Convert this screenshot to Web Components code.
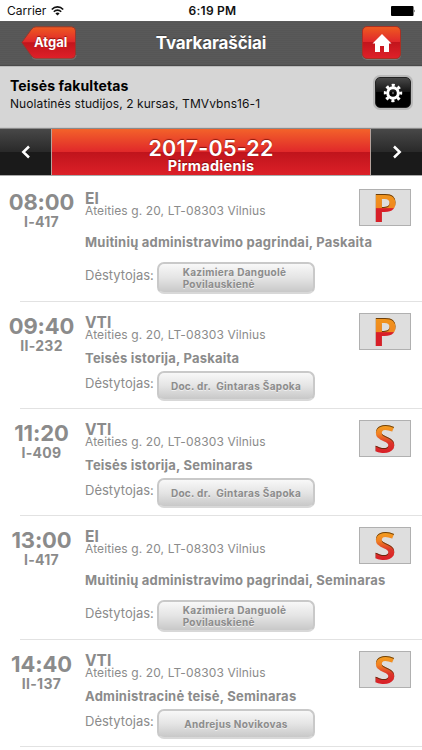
<!DOCTYPE html>
<html lang="lt">
<head>
<meta charset="utf-8">
<title>Tvarkaraščiai</title>
<style>
    body {
        margin: 0;
        width: 422px;
        height: 750px;
        overflow: hidden;
        background: #fff;
        font-family: Inter, "Liberation Sans", sans-serif;
    }
</style>
</head>
<body>
<timetable-app></timetable-app>

<script>
const define = (name, template) => customElements.define(name,
    class extends HTMLElement {
        constructor() {
            super();
            this.attachShadow({ mode: 'open' }).innerHTML = template;
        }
    });

define('status-bar', `<style>
    :host {
        display: grid;
        grid-template-columns: 1fr auto 1fr;
        align-items: center;
        height: 21px;
        padding: 0 6px 0 7px;
        box-sizing: border-box;
        font-size: 12px;
        line-height: 20px;
        color: #111;
    }
    .left { display: flex; align-items: center; gap: 5px; }
    .time { padding-left: 2px; font-weight: 600; letter-spacing: 0.25px; }
    .battery { justify-self: end; }
    svg { display: block; }
</style>
<div class="left">
    <span>Carrier</span>
    <svg width="13" height="10" viewBox="0 0 13 10" fill="none" stroke="#111" stroke-width="1.6">
        <path d="M.8 3.6C4-.1 9-.1 12.200 3.600M2.800 5.800C5 3.500 8 3.500 10.200 5.800"/>
        <path d="M4.400 7.400C5.600 6.200 7.400 6.200 8.600 7.400L6.500 9.600Z" fill="#111" stroke="none"/>
    </svg>
</div>
<span class="time">6:19 PM</span>
<svg class="battery" width="25" height="10" viewBox="0 0 25 10">
    <rect width="22.500" height="10" rx="1" fill="#000"/>
    <path d="M23.300 3.500Q24.600 5 23.300 6.500Z" fill="#000"/>
</svg>`);

define('back-button', `<style>
    :host { display: block; position: relative; width: 56px; height: 34px; }
    svg { display: block; }
    span {
        position: absolute;
        left: 13px;
        top: 0;
        font-size: 13px;
        font-weight: 700;
        line-height: 33px;
        color: #fff;
        text-shadow: 0 -1px 1px rgba(90, 0, 0, 0.6);
    }
</style>
<svg width="56" height="34" viewBox="0 0 56 34">
    <defs>
        <linearGradient id="g" x1="0" y1="0" x2="0" y2="1">
            <stop offset="0" stop-color="#ee5a20"/>
            <stop offset=".48" stop-color="#e0282c"/>
            <stop offset=".5" stop-color="#c2151c"/>
            <stop offset="1" stop-color="#df2029"/>
        </linearGradient>
    </defs>
    <path d="M.8 16.500L10.500 3.200Q12.500.800 15 .800H50.500Q54.500.800 54.500 4.800V28.500Q54.500 32.500 50.500 32.500H15Q12.500 32.500 10.500 30Z" fill="url(#g)" stroke="#8f3a30" stroke-width="1"/>
    <path d="M11 31.500Q12.500 33.200 15 33.200H50.500Q54.500 33.200 55.100 29" fill="none" stroke="#888" stroke-width=".6"/>
</svg>
<span><slot></slot></span>`);

define('icon-button', `<style>
    :host {
        display: flex;
        align-items: center;
        justify-content: center;
        box-sizing: border-box;
        width: 39px;
        height: 33px;
        border: 1px solid #a83024;
        border-radius: 5px;
        background: linear-gradient(#ee5a20, #e0282c 48%, #c2151c 50%, #df2029);
        box-shadow: 0 1px 0 #777;
    }
    :host([dark]) {
        width: 36px;
        height: 31px;
        border-color: #222;
        background: linear-gradient(#484848, #141414 48%, #000 50%, #000);
        box-shadow: 0 0 0 2px #b9b9b9;
    }
</style>
<slot></slot>`);

define('title-bar', `<style>
    :host {
        display: grid;
        grid-template-columns: 56px 1fr 39px;
        align-items: start;
        box-sizing: border-box;
        height: 45px;
        padding: 5px 21px 0;
        background: repeating-linear-gradient(#595959 0 1px, #565656 1px 2px);
        border-bottom: 1px solid #4a4a4a;
    }
    h1 {
        margin: 0;
        padding-right: 17px;
        text-align: center;
        font-size: 17px;
        font-weight: 700;
        line-height: 35px;
        letter-spacing: -0.15px;
        color: #fff;
        text-shadow: 0 -1px 1px rgba(0, 0, 0, 0.3);
    }
</style>
<slot name="back"></slot>
<h1><slot></slot></h1>
<slot name="action"></slot>`);

define('group-info', `<style>
    :host {
        display: flex;
        align-items: flex-start;
        justify-content: space-between;
        box-sizing: border-box;
        height: 62px;
        padding: 10px 11px 0 10px;
        background: #d6d6d6;
        border-top: 1px solid #bbb;
        border-bottom: 1px solid #c9c9c9;
        color: #111;
    }
    .name { font-size: 14px; font-weight: 700; line-height: 18px; letter-spacing: 0.12px; color: #000; }
    .group { font-size: 12px; line-height: 17px; letter-spacing: 0.08px; }
</style>
<div>
    <div class="name"><slot name="name"></slot></div>
    <div class="group"><slot></slot></div>
</div>
<slot name="action"></slot>`);

define('day-picker', `<style>
    :host {
        display: grid;
        grid-template-columns: 51px 1fr 51px;
        box-sizing: border-box;
        height: 48px;
        margin-bottom: 2px;
        border-top: 1px solid #8a8a8a;
        border-bottom: 1px solid #aaa;
    }
    .arrow {
        display: flex;
        align-items: center;
        justify-content: center;
        background: linear-gradient(#484848, #292929 50%, #1a1a1a 51%, #1a1a1a);
    }
    .day {
        padding-top: 8px;
        text-align: center;
        color: #fff;
        border: solid #b5a29c;
        border-width: 0 1px;
        background: linear-gradient(#f3622a, #e0282a 50%, #c0141c 51%, #dc2028);
        text-shadow: 0 -1px 1px rgba(90, 0, 0, 0.65);
    }
    .date { font-size: 21.500px; font-weight: 600; line-height: 22px; letter-spacing: 0.2px; }
    .weekday { font-size: 14.500px; font-weight: 700; line-height: 14px; letter-spacing: 0.25px; }
</style>
<div class="arrow">
    <svg width="12" height="14" viewBox="0 0 12 14" fill="none" stroke="#fff" stroke-width="2.500"><path d="M9 1.500L3.300 7L9 12.500"/></svg>
</div>
<div class="day">
    <div class="date"><slot></slot></div>
    <div class="weekday"><slot name="weekday"></slot></div>
</div>
<div class="arrow">
    <svg width="12" height="14" viewBox="0 0 12 14" fill="none" stroke="#fff" stroke-width="2.500"><path d="M3 1.500L8.700 7L3 12.500"/></svg>
</div>`);

customElements.define('type-badge',
    class extends HTMLElement {
        constructor() {
            super();
            this.attachShadow({ mode: 'open' });
        }
        connectedCallback() {
            const letter = this.getAttribute('letter');
            const stops = letter === 'P'
                ? '<stop offset="0" stop-color="#f0961c"/><stop offset=".5" stop-color="#f08820"/><stop offset=".54" stop-color="#d81f28"/><stop offset="1" stop-color="#d81f28"/>'
                : '<stop offset="0" stop-color="#f5a51e"/><stop offset=".35" stop-color="#f08024"/><stop offset=".65" stop-color="#dc342a"/><stop offset="1" stop-color="#d81f28"/>';
            this.shadowRoot.innerHTML = `<style>
    :host {
        display: block;
        box-sizing: border-box;
        width: 52px;
        height: 37px;
        border: 1px solid #b0b0b0;
        background: #dedede;
    }
    svg { display: block; overflow: visible; }
    text { font-family: "Open Sans", sans-serif; font-weight: 700; font-size: 40px; }
</style>
<svg width="50" height="35" viewBox="0 0 50 35">
    <defs>
        <linearGradient id="fill" gradientUnits="userSpaceOnUse" x1="0" y1="3" x2="0" y2="32">${stops}</linearGradient>
        <filter id="inset" x="-20%" y="-20%" width="140%" height="140%" color-interpolation-filters="sRGB">
            <feGaussianBlur in="SourceAlpha" stdDeviation=".7"/>
            <feOffset dx=".3" dy="1" result="moved"/>
            <feFlood flood-color="#4a2808" flood-opacity=".8"/>
            <feComposite in2="moved" operator="out"/>
            <feComposite in2="SourceAlpha" operator="in" result="shade"/>
            <feMerge><feMergeNode in="SourceGraphic"/><feMergeNode in="shade"/></feMerge>
        </filter>
    </defs>
    <text x="24.700" y="31.500" text-anchor="middle" fill="url(#fill)" filter="url(#inset)">${letter}</text>
</svg>`;
        }
    });

define('lecturer-button', `<style>
    :host {
        display: flex;
        align-items: center;
        justify-content: center;
        box-sizing: border-box;
        width: 158px;
        height: 30px;
        border: 2px solid #c9c9c9;
        border-bottom-color: #d8d8d8;
        border-radius: 7px;
        background: linear-gradient(#f8f8f8, #e4e4e4 50%, #c8c8c8);
        font-size: 10px;
        font-weight: 700;
        line-height: 12px;
        letter-spacing: 0.32px;
        color: #8c8c8c;
        text-shadow: 0 1px 0 #eee;
        white-space: pre;
    }
    :host([tall]) { height: 32px; padding-right: 3px; }
</style>
<slot></slot>`);

define('lesson-row', `<style>
    :host {
        display: grid;
        grid-template-columns: 83px minmax(0, 1fr) 52px;
        box-sizing: border-box;
        height: 107px;
        padding-right: 11.500px;
        color: #8b8b8b;
        background: linear-gradient(#e2e2e2, #e2e2e2) 20px 100% / 100% 1px no-repeat;
    }
    :host([tall]) { height: 124px; }
    .when { padding-top: 13px; text-align: center; }
    .time { font-size: 22px; font-weight: 650; line-height: 22px; letter-spacing: -0.1px; }
    .room { padding-top: 1px; font-size: 14px; font-weight: 700; line-height: 16px; letter-spacing: 0.3px; }
    .what {
        display: flex;
        flex-direction: column;
        padding: 14px 0 8px 2px;
        white-space: nowrap;
    }
    .building { font-size: 15.500px; font-weight: 650; line-height: 13px; }
    .address { font-size: 12px; line-height: 12px; letter-spacing: 0.11px; }
    .subject {
        display: flex;
        flex: 1;
        align-items: center;
        padding-top: 4px;
        font-size: 13px;
        font-weight: 650;
        letter-spacing: 0.22px;
    }
    .by { display: flex; align-items: center; }
    .label { width: 72px; padding-bottom: 7px; font-size: 13px; }
    .badge { padding-top: 11px; }
</style>
<div class="when">
    <div class="time"><slot name="time"></slot></div>
    <div class="room"><slot name="room"></slot></div>
</div>
<div class="what">
    <div class="building"><slot name="building"></slot></div>
    <div class="address">Ateities g. 20, LT-08303 Vilnius</div>
    <div class="subject"><slot></slot></div>
    <div class="by"><span class="label">Dėstytojas:</span><slot name="lecturer"></slot></div>
</div>
<div class="badge"><slot name="badge"></slot></div>`);

const lessons = [
    { time: '08:00', room: 'I-417', building: 'EI', subject: 'Muitinių administravimo pagrindai, Paskaita', lecturer: 'Kazimiera Danguolė\nPovilauskienė', letter: 'P' },
    { time: '09:40', room: 'II-232', building: 'VTI', subject: 'Teisės istorija, Paskaita', lecturer: 'Doc. dr.  Gintaras Šapoka', letter: 'P' },
    { time: '11:20', room: 'I-409', building: 'VTI', subject: 'Teisės istorija, Seminaras', lecturer: 'Doc. dr.  Gintaras Šapoka', letter: 'S' },
    { time: '13:00', room: 'I-417', building: 'EI', subject: 'Muitinių administravimo pagrindai, Seminaras', lecturer: 'Kazimiera Danguolė\nPovilauskienė', letter: 'S' },
    { time: '14:40', room: 'II-137', building: 'VTI', subject: 'Administracinė teisė, Seminaras', lecturer: 'Andrejus Novikovas', letter: 'S' }
];

const lessonTemplate = (l) => {
    // two-line lecturer names make the whole row taller
    const tall = l.lecturer.includes('\n') ? 'tall' : '';
    return `<lesson-row ${tall}>
    <span slot="time">${l.time}</span>
    <span slot="room">${l.room}</span>
    <span slot="building">${l.building}</span>
    <span>${l.subject}</span>
    <lecturer-button slot="lecturer" ${tall}>${l.lecturer}</lecturer-button>
    <type-badge slot="badge" letter="${l.letter}"></type-badge>
</lesson-row>`.replace(/>\n\s*</g, '><');
};

define('timetable-app', `<style>
    :host { display: block; width: 422px; }
    svg { display: block; }
</style>
<status-bar></status-bar>
<title-bar>
    <back-button slot="back">Atgal</back-button>Tvarkaraščiai<icon-button slot="action">
        <svg width="20" height="20" viewBox="0 0 20 20" fill="#fff"><path d="M10 1L19.500 10.500H17V19H12V13H8V19H3V10.500H.500Z"/></svg>
    </icon-button>
</title-bar>
<group-info>
    <span slot="name">Teisės fakultetas</span>Nuolatinės studijos, 2 kursas, TMVvbns16-1<icon-button dark slot="action">
        <svg width="20" height="20" viewBox="-10 -10 20 20" fill="none" stroke="#fff">
            <circle r="5.300" stroke-width="3"/>
            <circle r="7.700" stroke-width="3" stroke-dasharray="3 3.047" stroke-dashoffset="1.500"/>
            <circle r="1.200" fill="#555" stroke="none"/>
        </svg>
    </icon-button>
</group-info>
<day-picker>2017-05-22<span slot="weekday">Pirmadienis</span></day-picker>
${lessons.map(lessonTemplate).join('')}`);
</script>
</body>
</html>
